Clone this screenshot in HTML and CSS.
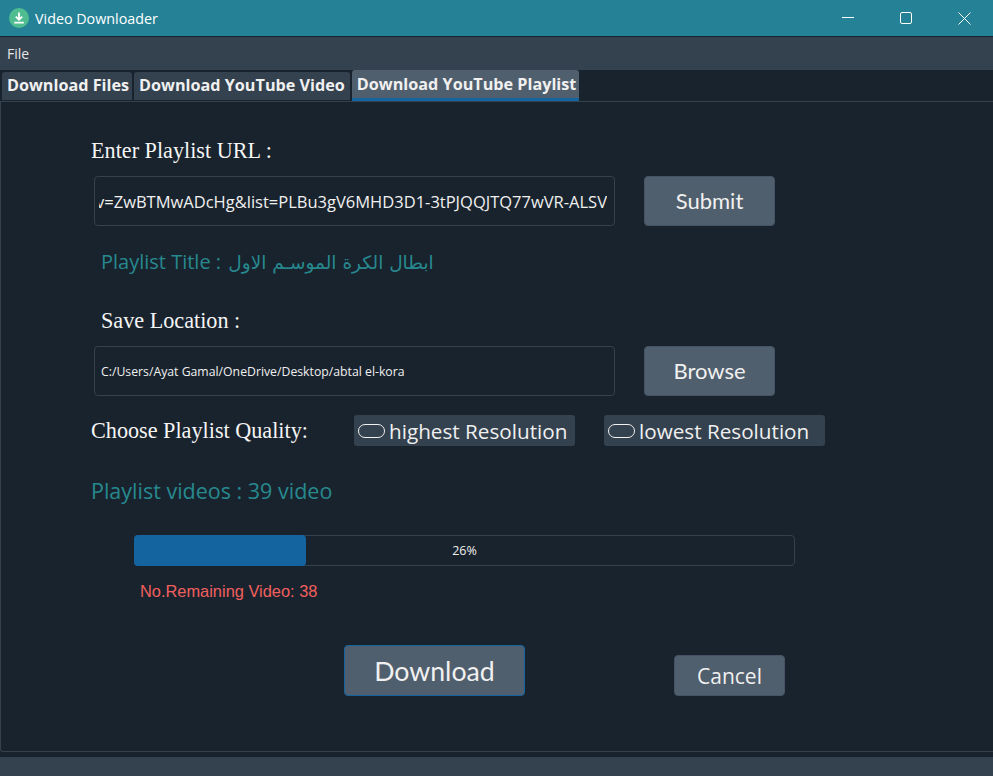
FILE: index.html
```html
<!DOCTYPE html>
<html lang="en">
<head>
    <meta charset="UTF-8">
    <meta name="viewport" content="width=device-width, initial-scale=1.0">
    <title>Video Downloader</title>
    <link rel="stylesheet" href="styles.css">
</head>
<body>
    <header class="titlebar">
        <svg class="app-icon" width="20" height="20" viewBox="0 0 20 20">
            <circle cx="10" cy="10" r="10" fill="#4fbd8f"/>
            <path d="M10 4.5v7M6.8 8.6l3.2 3.2 3.2-3.2M5.2 14.6h9.6" fill="none" stroke="#fff" stroke-width="1.8"/>
        </svg>
        <span class="app-name">Video Downloader</span>
        <div class="window-btns">
            <span class="window-btn">
                <svg width="12" height="12" viewBox="0 0 12 12"><path d="M0 5.5h12" stroke="#fff" fill="none"/></svg>
            </span>
            <span class="window-btn">
                <svg width="12" height="12" viewBox="0 0 12 12"><rect x=".5" y=".5" width="11" height="11" rx="1.5" stroke="#fff" fill="none"/></svg>
            </span>
            <span class="window-btn">
                <svg width="13" height="13" viewBox="0 0 13 13"><path d="M.5.5l12 12M12.5.5l-12 12" stroke="#fff" fill="none"/></svg>
            </span>
        </div>
    </header>

    <nav class="menubar"><span>File</span></nav>

    <div class="tabs">
        <div class="tab">Download Files</div>
        <div class="tab tab-wide">Download YouTube Video</div>
        <div class="tab active">Download YouTube Playlist</div>
    </div>

    <main class="pane">
        <div class="label serif">Enter Playlist URL :</div>
        <div class="field-row">
            <div class="field url-field"><div class="field-clip"><span>https://www.youtube.com/watch?v=ZwBTMwADcHg&amp;list=PLBu3gV6MHD3D1-3tPJQQJTQ77wVR-ALSV</span></div></div>
            <button class="btn btn-side">Submit</button>
        </div>

        <div class="teal-text playlist-title">Playlist Title : <span lang="ar" class="arabic">ابطال الكرة الموسـم الاول</span></div>

        <div class="label serif save-label">Save Location :</div>
        <div class="field-row">
            <div class="field path-field"><div class="field-clip path-clip"><span>C:/Users/Ayat Gamal/OneDrive/Desktop/abtal el-kora</span></div></div>
            <button class="btn btn-side">Browse</button>
        </div>

        <div class="quality-row">
            <div class="label serif quality-label">Choose Playlist Quality:</div>
            <label class="radio"><span class="radio-mark"></span>highest Resolution</label>
            <label class="radio"><span class="radio-mark"></span>lowest Resolution</label>
        </div>

        <div class="teal-text playlist-count">Playlist videos : 39 video</div>

        <div class="progress">
            <div class="progress-chunk" style="width: 26.1%"></div>
            <span class="progress-text">26%</span>
        </div>
        <div class="remaining">No.Remaining Video: 38</div>

        <div class="action-row">
            <button class="btn btn-download">Download</button>
            <button class="btn btn-cancel">Cancel</button>
        </div>
    </main>

    <footer class="statusbar"></footer>
</body>
</html>
```

FILE: styles.css
```css
* {
    box-sizing: border-box;
}
html, body {
    height: 100%;
}
body {
    margin: 0;
    width: 993px;
    height: 776px;
    overflow: hidden;
    display: flex;
    flex-direction: column;
    background: #19232d;
    color: #f0f0f0;
    font-family: "Open Sans", "Noto Sans", sans-serif;
}
.serif {
    font-family: "Liberation Serif", serif;
}

/* window chrome */
.titlebar {
    height: 37px;
    flex: none;
    display: flex;
    align-items: center;
    padding-left: 9px;
    background: #258296;
    border-bottom: 1px solid #19232d;
    color: #fff;
}
.app-icon {
    flex: none;
}
.app-name {
    margin-left: 6px;
    font-size: 14.3px;
}
.window-btns {
    margin-left: auto;
    margin-right: -1px;
    display: flex;
}
.window-btn {
    width: 58.5px;
    height: 36px;
    display: flex;
    align-items: center;
    justify-content: center;
}
.menubar {
    height: 33px;
    flex: none;
    display: flex;
    align-items: center;
    padding-left: 7px;
    background: #34414e;
    font-size: 14px;
    color: #e6e6e6;
}

/* tabs */
.tabs {
    height: 32px;
    flex: none;
    display: flex;
    align-items: flex-end;
    gap: 2px;
    padding: 0 0 1px 2px;
    border-bottom: 1px solid #34414e;
}
.tab {
    height: 28px;
    padding: 0 3px 2px 5px;
    display: flex;
    align-items: center;
    background: #34414e;
    border-radius: 3px 3px 0 0;
    font-size: 16.2px;
    font-weight: 700;
    white-space: nowrap;
}
.tab-wide {
    padding-right: 5px;
}
.tab.active {
    height: 31px;
    padding-bottom: 0;
    background: #505f6d;
    border-bottom: 3px solid #1464a0;
    margin-bottom: -1px;
}

/* main form */
.pane {
    height: 650px;
    flex: none;
    padding: 0 0 0 90px;
    border: 1px solid #34414e;
    border-top: 0;
    border-right: 0;
    border-radius: 0 0 0 3px;
}
.label {
    font-size: 22.2px;
    line-height: 26px;
    color: #f5f5f5;
    white-space: nowrap;
}
.pane > .label:first-child {
    margin-top: 36px;
}
.field-row {
    display: flex;
    gap: 29px;
    margin: 12px 0 0 3px;
}
.field {
    width: 521px;
    height: 50px;
    padding: 0 7px 0 4px;
    display: flex;
    align-items: center;
    border: 1px solid #34414e;
    border-radius: 4px;
}
.field-clip {
    flex: 1;
    min-width: 0;
    display: flex;
    justify-content: flex-end;
    overflow: hidden;
    white-space: nowrap;
}
.field-clip span {
    flex: none;
}
.url-field {
    font-size: 16.5px;
}
.path-field {
    font-size: 12.25px;
}
.path-clip {
    justify-content: flex-start;
    padding-left: 2px;
}
.btn {
    border: 1px solid #455364;
    border-radius: 4px;
    background: #505f6d;
    color: #f0f0f0;
    font-family: Lato, sans-serif;
    padding: 0;
}
.btn-side {
    width: 131px;
    height: 50px;
    padding-bottom: 2px;
    font-size: 22px;
}
.teal-text {
    color: #27898f;
    font-size: 20px;
    line-height: 28px;
}
.playlist-title {
    margin: 22px 0 0 10px;
}
.arabic {
    margin-left: 2px;
    font-family: "DejaVu Sans", sans-serif;
    font-size: 18.5px;
}
.save-label {
    margin: 31px 0 0 10px;
}
.quality-row {
    display: flex;
    align-items: center;
    margin-top: 19px;
    height: 31px;
}
.quality-label {
    width: 263px;
}
.radio {
    width: 221px;
    height: 31px;
    margin-right: 29px;
    padding-left: 4px;
    display: flex;
    align-items: center;
    background: #34414e;
    border-radius: 3px;
    font-size: 20.7px;
    white-space: nowrap;
}
.radio-mark {
    width: 27px;
    height: 14px;
    margin-right: 4px;
    flex: none;
    border: 1px solid #f0f0f0;
    border-radius: 7px;
}
.playlist-count {
    font-size: 21.5px;
    margin-top: 31px;
}
.progress {
    width: 661px;
    height: 31px;
    margin: 30px 0 0 43px;
    position: relative;
    display: flex;
    align-items: center;
    justify-content: center;
    border: 1px solid #34414e;
    border-radius: 4px;
    font-size: 12.5px;
}
.progress-chunk {
    position: absolute;
    left: -1px;
    top: -1px;
    bottom: -1px;
    background: #1464a0;
    border-radius: 4px;
}
.progress-text {
    position: relative;
}
.remaining {
    margin: 15px 0 0 49px;
    font-family: "Liberation Sans", sans-serif;
    font-size: 16.4px;
    line-height: 20px;
    color: #f25f5f;
}
.action-row {
    display: flex;
    align-items: flex-end;
    margin: 44px 0 0 253px;
}
.btn-download {
    width: 181px;
    height: 51px;
    border-color: #1464a0;
    font-size: 26.7px;
}
.btn-cancel {
    width: 111px;
    height: 41px;
    margin-left: 149px;
    font-family: "Open Sans", sans-serif;
    font-size: 21px;
}
.statusbar {
    height: 20px;
    flex: none;
    margin-top: 5px;
    background: #34414e;
}
```
